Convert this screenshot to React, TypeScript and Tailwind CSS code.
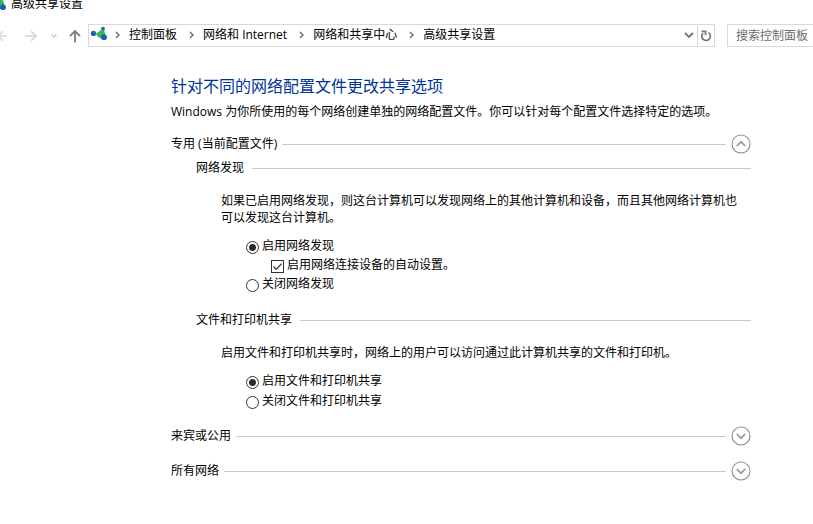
import React, { useState } from "react"

function NetworkIcon({ className }: { className?: string }) {
    return (
        <svg viewBox="0 0 18 16" className={className} aria-hidden="true">
            <path d="M3 7L9 8L13 3" stroke="#9fc3dd" strokeWidth="0.8" fill="none" />
            <circle cx="3.4" cy="7.4" r="2.6" fill="#1d63b4" />
            <circle cx="13" cy="2.8" r="2" fill="#27699f" />
            <path d="M5.8 8L11.2 3.8Q15 3.4 15 8Q15 12.4 11.8 13Q7.5 11.5 5.8 8Z" fill="#36b84f" />
            <circle cx="14" cy="11.2" r="2.9" fill="#1b61b8" />
        </svg>
    )
}

function Crumb({ label }: { label: string }) {
    return (
        <li className="flex items-center">
            <svg viewBox="0 0 5 8" className="mr-[9px] h-2 w-[5px]" fill="none" stroke="#6b6b6b" strokeWidth="1.4" aria-hidden="true">
                <path d="M1 1L4 4L1 7" />
            </svg>
            <a href="#" className="mr-3 whitespace-nowrap">{label}</a>
        </li>
    )
}

function Toolbar() {
    return (
        <div className="mt-3 flex h-[23px] items-stretch">
            <button aria-label="后退" className="flex w-[25px] items-center">
                <svg viewBox="0 0 8 12" className="h-3 w-2" fill="none" stroke="#d6d6d6" strokeWidth="1.5">
                    <path d="M0 6H7M3 1.2L-1.8 6L3 10.8" />
                </svg>
            </button>
            <button aria-label="前进" className="flex w-[25px] items-center">
                <svg viewBox="0 0 12 12" className="h-3 w-3" fill="none" stroke="#d2d2d2" strokeWidth="1.5">
                    <path d="M0 6H11M6.3 1.2L11 6L6.3 10.8" />
                </svg>
            </button>
            <button aria-label="最近浏览的位置" className="flex w-[18px] items-center">
                <svg viewBox="0 0 8 6" className="h-[6px] w-2" fill="none" stroke="#cccccc" strokeWidth="1.5">
                    <path d="M1.5 1.5L4 4L6.5 1.5" />
                </svg>
            </button>
            <button aria-label="上移" className="flex w-5 items-center">
                <svg viewBox="0 0 14 14" className="h-[14px] w-[14px]" fill="none" stroke="#808080" strokeWidth="1.9">
                    <path d="M7 13.5V2M2 7L7 2L12 7" />
                </svg>
            </button>
            <nav aria-label="地址" className="flex min-w-0 flex-1 border border-[#d9d9d9]">
                <NetworkIcon className="mt-[1px] ml-[1px] h-4 w-[18px] shrink-0" />
                <ol className="ml-[7px] flex flex-1 items-center pb-px">
                    <Crumb label="控制面板" />
                    <Crumb label="网络和 Internet" />
                    <Crumb label="网络和共享中心" />
                    <Crumb label="高级共享设置" />
                </ol>
                <button aria-label="以前的位置" className="flex w-4 items-center justify-center">
                    <svg viewBox="0 0 10 7" className="h-[7px] w-[10px]" fill="none" stroke="#757575" strokeWidth="1.8">
                        <path d="M1 1L5 5L9 1" />
                    </svg>
                </button>
                <button aria-label="刷新" className="flex w-[17px] items-center justify-center border-l border-[#d9d9d9]">
                    <svg viewBox="0 0 12 12" className="h-3 w-3" fill="none" stroke="#757575" strokeWidth="1.7">
                        <path d="M8.4 2.6A4.3 4.3 0 1 1 3 3.2" />
                        <path d="M1.6 1.4H5.6V5.2" />
                    </svg>
                </button>
            </nav>
            <input
                type="text"
                aria-label="搜索控制面板"
                placeholder="搜索控制面板"
                className="ml-3 w-[86px] border border-r-0 border-[#d9d9d9] pl-2 placeholder:text-[#6d6d6d] focus:outline-none"
            />
        </div>
    )
}

function Section({ title, open, onToggle, children }: { title: string; open: boolean; onToggle: () => void; children?: React.ReactNode }) {
    return (
        <section>
            <div className="flex h-5 items-center">
                <h2>{title}</h2>
                <div className="mr-[5px] ml-[5px] h-px flex-1 bg-[#c8c8c8]" />
                <button aria-label={title} aria-expanded={open} onClick={onToggle} className="h-5 w-5">
                    <svg viewBox="0 0 20 20" className="h-5 w-5" fill="none">
                        <circle cx="10" cy="10" r="9" stroke="#8e8e8e" strokeWidth="1.1" />
                        <path d={open ? "M5.8 12L10 7.8L14.2 12" : "M5.8 8L10 12.2L14.2 8"} stroke="#969696" strokeWidth="1.7" />
                    </svg>
                </button>
            </div>
            {open && children}
        </section>
    )
}

function SubHeading({ title }: { title: string }) {
    return (
        <div className="flex h-4 items-center">
            <h3>{title}</h3>
            <div className="ml-2 h-px flex-1 bg-[#c8c8c8]" />
        </div>
    )
}

function RadioRow({ name, label, checked, onChange }: { name: string; label: string; checked: boolean; onChange: () => void }) {
    return (
        <label className="flex items-center">
            <input
                type="radio"
                name={name}
                checked={checked}
                onChange={onChange}
                className="mt-[3px] mr-[3px] h-[13px] w-[13px] appearance-none rounded-full border border-[#333333] bg-white checked:bg-[radial-gradient(circle,#2b2b2b_3px,#ffffff_4px)]"
            />
            {label}
        </label>
    )
}

function App() {
    const [privateOpen, setPrivateOpen] = useState(true)
    const [guestOpen, setGuestOpen] = useState(false)
    const [allOpen, setAllOpen] = useState(false)
    const [discovery, setDiscovery] = useState(true)
    const [autoSetup, setAutoSetup] = useState(true)
    const [sharing, setSharing] = useState(true)

    return (
        <div className="min-h-screen overflow-hidden bg-white font-['Open_Sans','Noto_Sans_CJK_SC',sans-serif] text-xs leading-4 text-black">
            <header>
                <div className="flex h-3 items-end">
                    <NetworkIcon className="-ml-[11px] h-4 w-[18px] shrink-0" />
                    <span className="ml-1">高级共享设置</span>
                </div>
                <Toolbar />
            </header>

            <main className="mt-[27px] pr-[62px] pl-[171px]">
                <h1 className="text-base leading-6 text-[#003399]">针对不同的网络配置文件更改共享选项</h1>
                <p className="mt-[6px]">Windows 为你所使用的每个网络创建单独的网络配置文件。你可以针对每个配置文件选择特定的选项。</p>

                <div className="mt-[14px] flex flex-col gap-[15px]">
                    <Section title="专用 (当前配置文件)" open={privateOpen} onToggle={() => setPrivateOpen(!privateOpen)}>
                        <div className="mt-[6px] pl-[25px]">
                            <SubHeading title="网络发现" />
                            <div className="mt-4 pl-[25px]">
                                <p className="pr-2 leading-[17px]">如果已启用网络发现，则这台计算机可以发现网络上的其他计算机和设备，而且其他网络计算机也可以发现这台计算机。</p>
                                <div className="mt-3 flex flex-col gap-[3px] pl-[25px]">
                                    <RadioRow name="discovery" label="启用网络发现" checked={discovery} onChange={() => setDiscovery(true)} />
                                    <label className="ml-[25px] flex items-center">
                                        <span className="relative mt-[3px] mr-[3px] h-[13px] w-[13px]">
                                            <input
                                                type="checkbox"
                                                checked={autoSetup}
                                                onChange={() => setAutoSetup(!autoSetup)}
                                                className="block h-[13px] w-[13px] appearance-none border border-[#333333] bg-white"
                                            />
                                            {autoSetup && (
                                                <svg viewBox="0 0 13 13" className="pointer-events-none absolute inset-0" fill="none" stroke="#333333" strokeWidth="1.2">
                                                    <path d="M2.5 6.5L5.2 9.3L10.6 3.6" />
                                                </svg>
                                            )}
                                        </span>
                                        启用网络连接设备的自动设置。
                                    </label>
                                    <RadioRow name="discovery" label="关闭网络发现" checked={!discovery} onChange={() => setDiscovery(false)} />
                                </div>
                            </div>
                        </div>
                        <div className="mt-5 pb-[2px] pl-[25px]">
                            <SubHeading title="文件和打印机共享" />
                            <div className="mt-4 pl-[25px]">
                                <p className="pr-2 leading-[17px]">启用文件和打印机共享时，网络上的用户可以访问通过此计算机共享的文件和打印机。</p>
                                <div className="mt-3 flex flex-col gap-1 pl-[25px]">
                                    <RadioRow name="sharing" label="启用文件和打印机共享" checked={sharing} onChange={() => setSharing(true)} />
                                    <RadioRow name="sharing" label="关闭文件和打印机共享" checked={!sharing} onChange={() => setSharing(false)} />
                                </div>
                            </div>
                        </div>
                    </Section>
                    <Section title="来宾或公用" open={guestOpen} onToggle={() => setGuestOpen(!guestOpen)} />
                    <Section title="所有网络" open={allOpen} onToggle={() => setAllOpen(!allOpen)} />
                </div>
            </main>
        </div>
    )
}

export default App
